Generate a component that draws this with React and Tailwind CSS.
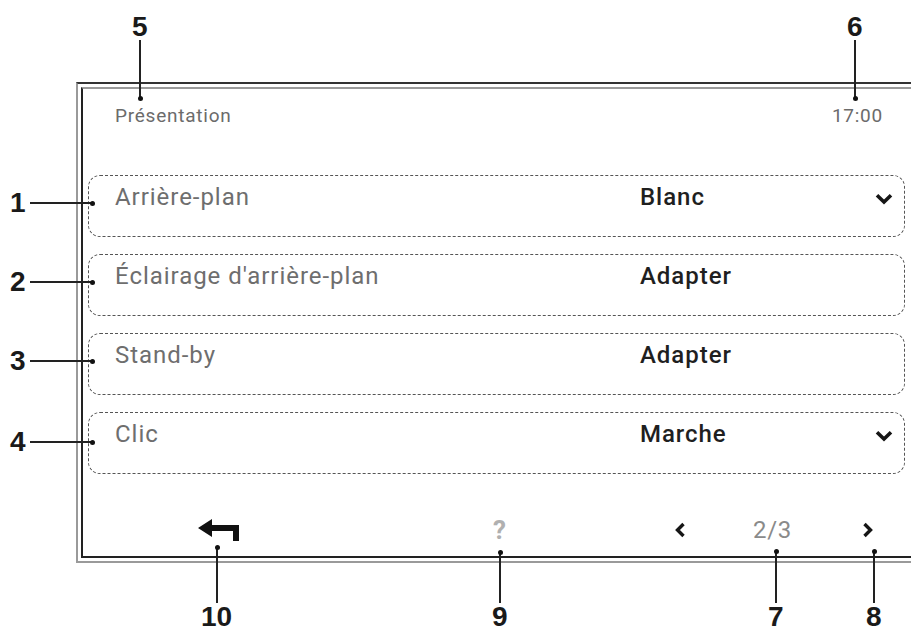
import React from 'react';

const rows = [
    { label: 'Arrière-plan', value: 'Blanc', dropdown: true },
    { label: "Éclairage d'arrière-plan", value: 'Adapter' },
    { label: 'Stand-by', value: 'Adapter' },
    { label: 'Clic', value: 'Marche', dropdown: true },
];

function ChevronDown() {
    return (
        <svg width="18" height="12" viewBox="0 0 18 12" className="block">
            <path d="M2 2.2 L9 9 L16 2.2" fill="none" stroke="#161616" strokeWidth="3.6" />
        </svg>
    );
}

function ChevronSide({ dir }) {
    const d = dir === 'left' ? 'M9.5 2 L3.5 8 L9.5 14' : 'M2.5 2 L8.5 8 L2.5 14';
    return (
        <svg width="12" height="16" viewBox="0 0 12 16" className="block">
            <path d={d} fill="none" stroke="#161616" strokeWidth="3.4" />
        </svg>
    );
}

function BackArrow() {
    return (
        <svg width="41" height="22" viewBox="0 0 41 22" className="block">
            <path d="M0 9 L14 0 L14 6 L41 6 L41 22 L35 22 L35 12 L14 12 L14 18 Z" fill="#111" />
        </svg>
    );
}

function SettingRow({ label, value, dropdown }) {
    return (
        <div className="h-[62px] w-[817px] rounded-[12px] border border-dashed border-[#555] flex items-start pt-[7px] pl-[26px] pr-[11px]">
            <span className="w-[525px] text-[24px] leading-[28px] tracking-[0.04em] text-[#6e6e6e]">{label}</span>
            <span className="flex-1 text-[24px] leading-[28px] tracking-[0.04em] font-medium text-[#1f1f1f]">{value}</span>
            {dropdown && <span className="mt-[10px]"><ChevronDown /></span>}
        </div>
    );
}

// leader line going up or down to a dot
function Leader({ x, dotY, end }) {
    return (
        <>
            <div className="absolute w-[1.5px] bg-[#222]" style={{ left: x - 0.75, top: Math.min(dotY, end), height: Math.abs(end - dotY) }} />
            <div className="absolute w-[5px] h-[5px] rounded-full bg-[#111]" style={{ left: x - 2.5, top: dotY - 2.5 }} />
        </>
    );
}

export default function App() {
    const font = { fontFamily: 'Roboto, "Liberation Sans", sans-serif' };
    const num = 'absolute text-[28px] leading-none font-bold text-[#1a1a1a] font-["Liberation_Sans",Arial,sans-serif]';

    return (
        <div className="relative w-[911px] h-[630px] overflow-hidden bg-white">
            {/* device screen */}
            <div className="ml-[76px] mt-[82px] w-[900px] h-[481px] border-2 border-t-[#333] border-l-[#9a9a9a] border-b-[#9a9a9a] border-r-[#9a9a9a] p-[3px]">
                <div className="h-full border-2 border-t-[#9a9a9a] border-l-[#222] border-b-[#222] border-r-[#222] pl-[5px] pt-[15px]" style={font}>
                    <div className="flex justify-between items-center w-[795px] pl-[27px] h-6 text-[19px] tracking-[0.04em] text-[#6b6b6b]">
                        <span>Présentation</span>
                        <span>17:00</span>
                    </div>

                    <div className="mt-[47px] flex flex-col gap-[17px]">
                        {rows.map(r => <SettingRow key={r.label} {...r} />)}
                    </div>

                    <div className="mt-[40px] h-8 flex items-center">
                        <span className="ml-[110px]"><BackArrow /></span>
                        <span className="ml-[254px] text-[26px] font-bold text-[#b0b0b0]">?</span>
                        <span className="ml-[168px]"><ChevronSide dir="left" /></span>
                        <span className="ml-[67px] text-[24px] tracking-[0.03em] text-[#8a8a8a]">2/3</span>
                        <span className="ml-[70px]"><ChevronSide dir="right" /></span>
                    </div>
                </div>
            </div>

            {/* callouts top */}
            <div className={num} style={{ left: 132, top: 13 }}>5</div>
            <Leader x={140} dotY={98} end={40} />
            <div className={num} style={{ left: 847, top: 13 }}>6</div>
            <Leader x={855} dotY={98} end={40} />

            {/* callouts left */}
            {[['1', 203], ['2', 282], ['3', 361], ['4', 442]].map(([n, y]) => (
                <React.Fragment key={n}>
                    <div className={num} style={{ left: 10, top: y - 14 }}>{n}</div>
                    <div className="absolute h-[1.5px] bg-[#222]" style={{ left: 30, top: y - 0.75, width: 62 }} />
                    <div className="absolute w-[5px] h-[5px] rounded-full bg-[#111]" style={{ left: 90, top: y - 2.5 }} />
                </React.Fragment>
            ))}

            {/* callouts bottom */}
            <div className={num} style={{ left: 201, top: 603 }}>10</div>
            <Leader x={217} dotY={547} end={603} />
            <div className={num} style={{ left: 492, top: 603 }}>9</div>
            <Leader x={500} dotY={552} end={603} />
            <div className={num} style={{ left: 768, top: 603 }}>7</div>
            <Leader x={776} dotY={551} end={603} />
            <div className={num} style={{ left: 866, top: 603 }}>8</div>
            <Leader x={874} dotY={551} end={603} />
        </div>
    );
}
